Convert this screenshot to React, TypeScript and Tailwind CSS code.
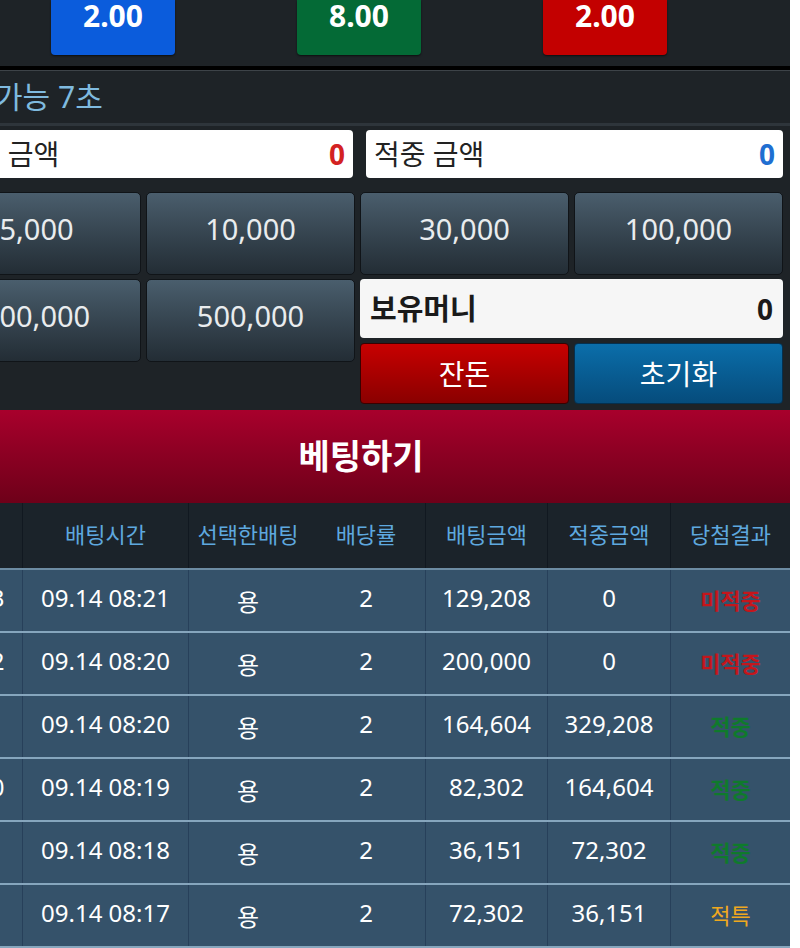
import React from 'react';

const font = { fontFamily: '"Noto Sans", "Noto Sans CJK KR", sans-serif' };

const odds = [
  { value: '2.00', color: 'bg-[#0b5cdc]' },
  { value: '8.00', color: 'bg-[#046a36]' },
  { value: '2.00', color: 'bg-[#c30000]' },
];

const chips = ['5,000', '10,000', '30,000', '100,000', '300,000', '500,000'];

type ResultKind = 'lose' | 'win' | 'refund';

interface BetRow {
  no: string;
  time: string;
  pick: string;
  rate: string;
  amount: string;
  payout: string;
  result: ResultKind;
}

const rows: BetRow[] = [
  { no: '2013', time: '09.14 08:21', pick: '용', rate: '2', amount: '129,208', payout: '0', result: 'lose' },
  { no: '2012', time: '09.14 08:20', pick: '용', rate: '2', amount: '200,000', payout: '0', result: 'lose' },
  { no: '2011', time: '09.14 08:20', pick: '용', rate: '2', amount: '164,604', payout: '329,208', result: 'win' },
  { no: '2010', time: '09.14 08:19', pick: '용', rate: '2', amount: '82,302', payout: '164,604', result: 'win' },
  { no: '2011', time: '09.14 08:18', pick: '용', rate: '2', amount: '36,151', payout: '72,302', result: 'win' },
  { no: '2011', time: '09.14 08:17', pick: '용', rate: '2', amount: '72,302', payout: '36,151', result: 'refund' },
];

const resultLabel: Record<ResultKind, { text: string; cls: string }> = {
  lose: { text: '미적중', cls: 'text-[#c4161c] font-bold' },
  win: { text: '적중', cls: 'text-[#0f7a2c] font-bold' },
  refund: { text: '적특', cls: 'text-[#f0a81e]' },
};

// column widths of the history table (first one is partly off screen)
const cols = ['w-[91px]', 'w-[166px]', 'w-[118px]', 'w-[119px]', 'w-[122px]', 'w-[123px]', 'w-[119px]'];
const headers = ['번호', '배팅시간', '선택한배팅', '배당률', '배팅금액', '적중금액', '당첨결과'];

const ChipButton = ({ label }: { label: string }) => (
  <button
    type="button"
    className="h-[83px] rounded-[5px] border border-[#101418] bg-gradient-to-b from-[#4a5e6d] to-[#232d35] text-[29px] leading-[40px] pb-[10px] text-[#e9ecee]"
  >
    {label}
  </button>
);

const App: React.FC = () => {
  return (
    <div className="w-[800px] h-[948px] bg-white overflow-hidden" style={font}>
      <div className="w-[790px] h-[948px] overflow-hidden bg-[#1e2327]">
        <div className="ml-[-68px] w-[858px]">
          {/* odds */}
          <div className="h-[66px] flex pl-[119px] gap-[122px]">
            {odds.map((o, i) => (
              <div
                key={i}
                className={`w-[124px] h-[55px] rounded-b-[4px] ${o.color} flex justify-center text-white font-bold text-[30px] leading-[32px] shadow-[0_1px_2px_rgba(0,0,0,0.6)]`}
              >
                {o.value}
              </div>
            ))}
          </div>
          <div className="h-[4px] bg-black" />
          <div className="h-[1px] bg-[#3d4348]" />

          {/* timer */}
          <div className="h-[52px] flex items-center pl-[63px] pb-[2px] text-[30px] text-[#7fbadf]">
            가능 7초
          </div>
          <div className="h-[3px] bg-[#2e353b]" />

          {/* amounts */}
          <div className="flex gap-[13px] pl-[9px] pr-[7px] pt-[4px]">
            <div className="w-[412px] h-[48px] rounded-[4px] bg-white flex items-center justify-between px-[8px]">
              <span className="text-[28px] text-[#222]">배팅 금액</span>
              <span className="text-[28px] font-bold text-[#d32222]">0</span>
            </div>
            <div className="flex-1 h-[48px] rounded-[4px] bg-white flex items-center justify-between px-[8px]">
              <span className="text-[28px] text-[#222]">적중 금액</span>
              <span className="text-[28px] font-bold text-[#1f6fd1]">0</span>
            </div>
          </div>

          {/* chips */}
          <div className="grid grid-cols-4 gap-x-[5px] gap-y-[4px] w-[851px] mt-[14px] items-start">
            {chips.slice(0, 4).map((c) => (
              <ChipButton key={c} label={c} />
            ))}
            <ChipButton label={chips[4]} />
            <ChipButton label={chips[5]} />
            <div className="col-span-2 flex flex-col gap-[5px]">
              <div className="h-[59px] rounded-[4px] bg-[#f6f6f6] flex items-center justify-between px-[10px]">
                <span className="text-[29px] font-bold text-[#1a1a1a]">보유머니</span>
                <span className="text-[28px] font-bold text-[#1a1a1a]">0</span>
              </div>
              <div className="grid grid-cols-2 gap-[5px]">
                <button
                  type="button"
                  className="h-[61px] rounded-[4px] border border-[#3a0000] bg-gradient-to-b from-[#c80000] to-[#8a0000] text-[28px] text-white"
                >
                  잔돈
                </button>
                <button
                  type="button"
                  className="h-[61px] rounded-[4px] border border-[#05304f] bg-gradient-to-b from-[#0b6eaa] to-[#064c7c] text-[28px] text-white"
                >
                  초기화
                </button>
              </div>
            </div>
          </div>

          {/* bet */}
          <button
            type="button"
            className="mt-[6px] w-[858px] h-[93px] bg-gradient-to-b from-[#a8002c] to-[#6e0019] text-white text-[34px] font-bold"
          >
            베팅하기
          </button>

          {/* history table */}
          <div className="w-[858px]">
            <div className="flex h-[67px] bg-[#1b232a] border-b-2 border-[#6d8ca3]">
              {headers.map((h, i) => (
                <div
                  key={h}
                  className={`${cols[i]} flex items-center justify-center pb-[2px] text-[22px] text-[#5ea8df] ${i === 2 || i === 6 ? '' : 'border-r border-[#111820]'}`}
                >
                  {h}
                </div>
              ))}
            </div>
            {rows.map((r, idx) => {
              const res = resultLabel[r.result];
              const cells = [r.no, r.time, r.pick, r.rate, r.amount, r.payout];
              return (
                <div key={idx} className="flex h-[63px] bg-[#35526a] border-b-2 border-[#86a6bd]">
                  {cells.map((c, i) => (
                    <div
                      key={i}
                      className={`${cols[i]} flex items-center justify-center text-[24px] text-white ${i === 2 ? 'pt-[2px]' : 'pb-[6px] border-r border-[#27405a]'}`}
                    >
                      {c}
                    </div>
                  ))}
                  <div className={`${cols[6]} flex items-center justify-center text-[22px] ${res.cls}`}>
                    {res.text}
                  </div>
                </div>
              );
            })}
          </div>
        </div>
      </div>
    </div>
  );
};

export default App;
